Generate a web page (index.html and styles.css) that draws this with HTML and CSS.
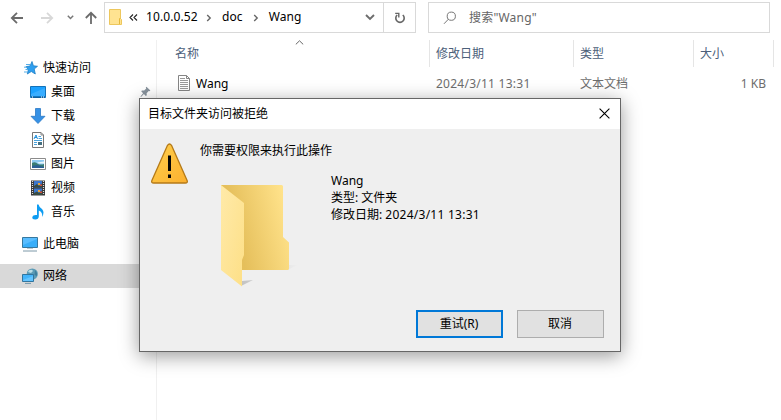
FILE: index.html
```html
<!DOCTYPE html>
<html lang="zh-CN">
<head>
<meta charset="utf-8">
<title>Wang</title>
<link rel="stylesheet" href="styles.css">
</head>
<body>
<div class="explorer">
  <header class="toolbar">
    <nav class="history">
      <svg width="104" height="35" viewBox="0 0 104 35" fill="none">
        <path d="M23 18H12M17 12.8L11.8 18L17 23.2" stroke="#6b6b6b" stroke-width="1.8"/>
        <path d="M41 18H52M47 12.8L52.2 18L47 23.2" stroke="#d8d8d8" stroke-width="1.8"/>
        <path d="M67.8 15.8L70.5 18.5L73.2 15.8" stroke="#777" stroke-width="1.5"/>
        <path d="M91 24V13M85.8 18L91 12.8L96.2 18" stroke="#6b6b6b" stroke-width="1.8"/>
      </svg>
    </nav>
    <div class="address">
      <svg class="address-folder" width="14" height="17" viewBox="0 0 14 17">
        <path d="M.5.5H11.5V9.5L12.5 10.5V15.5H.5Z" fill="#ffe391" stroke="#edc75d"/>
        <path d="M10.5 15V9.5H11.5" fill="none" stroke="#e5b83c"/>
      </svg>
      <svg class="overflow" width="9" height="9" viewBox="0 0 9 9"><path d="M4 1.5L1 4.5L4 7.5M8 1.5L5 4.5L8 7.5" fill="none" stroke="#222" stroke-width="1.1"/></svg>
      <span class="crumb host">10.0.0.52</span>
      <svg class="sep" width="6" height="8" viewBox="0 0 6 8"><path d="M1.2 1L4.2 4L1.2 7" fill="none" stroke="#666" stroke-width="1.4"/></svg>
      <span class="crumb doc">doc</span>
      <svg class="sep" width="6" height="8" viewBox="0 0 6 8"><path d="M1.2 1L4.2 4L1.2 7" fill="none" stroke="#666" stroke-width="1.4"/></svg>
      <span class="crumb">Wang</span>
      <svg class="drop" width="10" height="7" viewBox="0 0 10 7"><path d="M1 1L5 5L9 1" fill="none" stroke="#6d6d6d" stroke-width="1.9"/></svg>
      <div class="refresh">
        <svg width="12" height="12" viewBox="0 0 12 12"><path d="M3.2 3A4.2 4.2 0 1 0 8.8 3" fill="none" stroke="#666" stroke-width="1.6"/><path d="M1.2 1.4H4.8V5.4" fill="none" stroke="#666" stroke-width="1.4"/></svg>
      </div>
    </div>
    <div class="search">
      <svg width="14" height="14" viewBox="0 0 14 14" fill="none" stroke="#777"><circle cx="8.3" cy="5.2" r="4.1"/><path d="M5.4 8.2L1 12.8"/></svg>
      <span>搜索"Wang"</span>
    </div>
  </header>

  <main class="main">
    <aside class="sidebar">
      <div class="item quick">
        <svg width="16" height="16" viewBox="0 0 16 16"><path d="M10 1.5L11.4 5.8L15.5 6.3L12.2 9L13.3 14L9.3 11.5L5.3 14L6.3 9.8L4 6.6L8 6Z" fill="#2e9ff0" stroke="#1f7fc4" stroke-width=".8"/><path d="M4 4.5H8M2 7.2H5M3.5 9.5H6M2 12H5.5" stroke="#56aee8"/></svg>
        <span>快速访问</span>
      </div>
      <div class="item child">
        <svg width="16" height="16" viewBox="0 0 16 16"><path d="M.5 2.5H15.5V13.5H.5Z" fill="#1ba1ff" stroke="#1472b8"/><path d="M1 10L15 4V12H1Z" fill="#39adff"/><path d="M1 13H15" stroke="#0a4c83"/><path d="M2 13H3M11 13H12M13 13H14" stroke="#fff"/></svg>
        <span>桌面</span>
        <svg class="pin" width="11" height="12" viewBox="0 0 11 12"><path d="M6.4.8L10.4 4.6L9.4 5.3L8.7 5L6.6 7.2L6.8 9.3L5.8 10L3.9 8L1 11L.5 10.6L3.1 7.3L1.2 5.3L2 4.4L4.2 4.6L6.2 2.5L5.8 1.5Z" fill="#87929c"/></svg>
      </div>
      <div class="item child">
        <svg width="16" height="16" viewBox="0 0 16 16"><path d="M5.5.5H10.5V8.3H15L8 15.5L1 8.3H5.5Z" fill="#3691e5" stroke="#2b78c5" stroke-width=".8"/></svg>
        <span>下载</span>
      </div>
      <div class="item child">
        <svg width="16" height="16" viewBox="0 0 16 16"><path d="M2.5.5H11L13.5 3V15.5H2.5Z" fill="#fff" stroke="#777"/><path d="M11 .5V3H13.5" fill="none" stroke="#888"/><path d="M4 7L6 3L7.5 7M4.5 5.5H7" stroke="#2492dd" fill="none"/><path d="M8.5 4.5H11M8.5 6.5H12M4 8.5H12M4 10.5H7M4 12.5H7" stroke="#4aa3dc"/><path d="M8 10H12V13H8Z" fill="#456f80"/></svg>
        <span>文档</span>
      </div>
      <div class="item child">
        <svg width="16" height="16" viewBox="0 0 16 16"><path d="M.5 2.5H15.5V13.5H.5Z" fill="#fff" stroke="#8b8b8b"/><path d="M2 4H14V12H2Z" fill="#8dc8ef"/><path d="M2 7Q5 5 8 8Q11 9 14 8V12H2Z" fill="#397b72"/><path d="M2 10L7 9L14 11V12H2Z" fill="#295e94"/><path d="M7 6.5L14 5.5V7.5H9Z" fill="#e8f5fb"/></svg>
        <span>图片</span>
      </div>
      <div class="item child">
        <svg width="16" height="16" viewBox="0 0 16 16"><path d="M1 .5H15V15.5H1Z" fill="#383838"/><path d="M2.5 1V15M13.5 1V15" stroke="#ddd" stroke-width="1.2" stroke-dasharray="1 1"/><path d="M4 1H12V7.5H4ZM4 8.5H12V15H4Z" fill="#3c77ce"/><path d="M4 6L7 4L9 6L12 3.5V7.5H4ZM4 13L7 11.5L9 13L12 10.5V15H4Z" fill="#384d43"/><path d="M8 3H10V5H8ZM8 10H10V12H8Z" fill="#e9a53d"/><path d="M10 4.5H12V6H10ZM10 11.5H12V13H10Z" fill="#d6533b"/></svg>
        <span>视频</span>
      </div>
      <div class="item child">
        <svg width="16" height="16" viewBox="0 0 16 16"><path d="M7 .5H8.5Q9 3 12 5Q15 8 12 13Q13 8 8.8 6.5V12.5Q8.6 15.3 5.3 15.5Q2 15.5 2.3 13Q2.8 10.5 7 11Z" fill="#0d9cf2"/></svg>
        <span>音乐</span>
      </div>
      <div class="item root">
        <svg width="16" height="16" viewBox="0 0 16 16"><path d="M.5 1.5H15.5V11.5H.5Z" fill="#59bdff" stroke="#36789f"/><path d="M1 9L15 3V11H1Z" fill="#39aef9"/><path d="M5 12.5H11" stroke="#bdc9d0"/><path d="M1 15H15" stroke="#7d98a8"/></svg>
        <span>此电脑</span>
      </div>
      <div class="item root selected">
        <svg width="16" height="16" viewBox="0 0 16 16"><circle cx="10.3" cy="6" r="5.6" fill="#5b9bb6"/><path d="M7 2.3Q10 1 11 3L9 5L6 4Z" fill="#b9dce5"/><path d="M13 2L15 5V8L12.5 7Z" fill="#3f7f9d"/><path d="M.5 6.5H11.5V13.5H.5Z" fill="#43b4fa" stroke="#32759e"/><path d="M1 12L11 8V13H1Z" fill="#65c5ff"/><path d="M3 15.4H9" stroke="#7398ab"/></svg>
        <span>网络</span>
      </div>
    </aside>

    <section class="files">
      <div class="columns">
        <div class="col name">名称<svg class="sort" width="9" height="5" viewBox="0 0 9 5"><path d="M.8 4.4L4.5 .8L8.2 4.4" fill="none" stroke="#666"/></svg></div>
        <div class="col">修改日期</div>
        <div class="col">类型</div>
        <div class="col">大小</div>
      </div>
      <div class="file">
        <div class="filename">
          <svg width="12" height="16" viewBox="0 0 12 16"><path d="M.5.5H8.5L11.5 3.5V15.5H.5Z" fill="#fff" stroke="#858585"/><path d="M8.5.5V3.5H11.5" fill="none" stroke="#858585"/><path d="M2 3.5H7M2 5.5H10M2 7.5H10M2 9.5H10M2 11.5H10M2 13.5H10" stroke="#999"/></svg>
          <span>Wang</span>
        </div>
        <div class="cell date">2024/3/11 13:31</div>
        <div class="cell">文本文档</div>
        <div class="cell size">1 KB</div>
      </div>
    </section>
  </main>
</div>

<div class="dialog" role="dialog">
  <div class="titlebar">
    <span>目标文件夹访问被拒绝</span>
    <svg width="11" height="11" viewBox="0 0 11 11"><path d="M.6.6L10.4 10.4M10.4.6L.6 10.4" stroke="#000" stroke-width="1.1"/></svg>
  </div>
  <div class="body">
    <svg class="warning" width="38" height="42" viewBox="0 0 38 42">
      <defs><linearGradient id="amber" x2="1" y2="1"><stop stop-color="#ffd04d"/><stop offset="1" stop-color="#fbb02f"/></linearGradient></defs>
      <path d="M17.5 2.3Q19.5 -.3 21.5 2.3L37.1 37.4Q38 40 35.3 40H3.7Q1 40 1.9 37.4Z" fill="url(#amber)" stroke="#b57a17" stroke-width="1.3"/>
      <path d="M18 12.5H21V28H18ZM18 31.5H21V35H18Z" fill="#050505"/>
    </svg>
    <div class="message">
      <div class="prompt">你需要权限来执行此操作</div>
      <div class="details">
        <svg class="folder" width="80" height="106" viewBox="0 0 80 106">
          <defs>
            <linearGradient id="back" x1="0" y1=".7" x2="1" y2=".4"><stop offset=".25" stop-color="#e5bf5b"/><stop offset="1" stop-color="#ffe28a"/></linearGradient>
            <linearGradient id="front" x2="1" y2="1"><stop stop-color="#ffeaa9"/><stop offset="1" stop-color="#fddf86"/></linearGradient>
            <linearGradient id="shade"><stop stop-color="#c2c2c2"/><stop offset="1" stop-color="#efefef"/></linearGradient>
          </defs>
          <path d="M67 86L78 81L68 81ZM21 102L33 96L22 97Z" fill="url(#shade)"/>
          <path d="M1 1H61.5Q63 1 63 2.5V53L69 58.5V84.5Q69 86 67.5 86H1Z" fill="url(#back)"/>
          <path d="M1 1L24 19V71L22 76V102.5L1 86Z" fill="url(#front)"/>
        </svg>
        <div class="info">
          <div>Wang</div>
          <div>类型: 文件夹</div>
          <div>修改日期: <span class="date">2024/3/11 13:31</span></div>
        </div>
      </div>
    </div>
  </div>
  <div class="actions">
    <button class="button primary">重试(R)</button>
    <button class="button">取消</button>
  </div>
</div>
</body>
</html>
```
FILE: styles.css
```css
* { box-sizing: border-box; }
body {
  margin: 0;
  width: 781px;
  height: 420px;
  overflow: hidden;
  background: #fff;
  color: #000;
  font: 12px/17px "Noto Sans", "Noto Sans CJK SC", sans-serif;
}
svg { display: block; flex: none; }
span { white-space: nowrap; }

.explorer { height: 420px; display: flex; flex-direction: column; }
.toolbar { display: flex; height: 40px; }
.history { width: 104px; }
.address {
  display: flex;
  align-items: center;
  width: 312px;
  height: 31px;
  margin-top: 2px;
  padding-left: 4px;
  border: 1px solid #d9d9d9;
}
.overflow { margin: 0 8px 0 6px; }
.crumb { letter-spacing: .1px; padding-bottom: 2px; }
.crumb.host { width: 51px; }
.sep { margin: 0 10px; }
.host + .sep { margin-left: 9px; }
.drop { margin-left: auto; }
.refresh {
  display: flex;
  align-items: center;
  justify-content: center;
  align-self: stretch;
  width: 32px;
  margin-left: 8px;
  border-left: 1px solid #d9d9d9;
}
.search {
  display: flex;
  align-items: center;
  gap: 12px;
  width: 342px;
  height: 31px;
  margin: 2px 0 0 12px;
  padding-left: 14px;
  border: 1px solid #d9d9d9;
  color: #666;
}
.search span { letter-spacing: .2px; }

.main { display: flex; flex: 1; }
.sidebar { width: 157px; padding-top: 16px; border-right: 1px solid #f0f0f0; }
.item { display: flex; align-items: center; height: 24px; gap: 5px; padding-left: 22px; }
.item span { padding-bottom: 1px; }
.item.child { padding-left: 30px; }
.item.root { margin-top: 8px; }
.item.selected { background: #d9d9d9; }
.pin { margin-left: auto; margin-right: 5px; }

.files { flex: 1; }
.columns, .file { display: grid; grid-template-columns: 273px 144px 120px 80px; }
.col {
  position: relative;
  height: 27px;
  padding: 5px 0 0 6px;
  border-right: 1px solid #e5e5e5;
  color: #4c607a;
}
.col.name { padding-left: 18px; }
.sort { position: absolute; left: 138px; top: 0; }
.file { height: 24px; margin-top: 4px; align-items: center; color: #6d6d6d; }
.filename { display: flex; align-items: center; gap: 6px; padding-left: 21px; color: #000; }
.cell { padding-left: 6px; }
.date { letter-spacing: .25px; }
.size { text-align: right; padding-right: 8px; }

.dialog {
  position: absolute;
  left: 139px;
  top: 98px;
  width: 482px;
  height: 254px;
  display: flex;
  flex-direction: column;
  border: 1px solid #666;
  background: #efefef;
  box-shadow: 0 4px 18px rgba(0, 0, 0, .4);
}
.titlebar {
  display: flex;
  align-items: center;
  justify-content: space-between;
  height: 30px;
  padding: 0 10px 1px 8px;
  background: #fff;
}
.body { display: flex; flex: 1; padding: 13px 0 0 10px; }
.warning { margin-top: 1px; }
.message { margin-left: 12px; }
.details { display: flex; margin: 12px 0 0 20px; }
.folder { margin-top: 13px; }
.info { margin: 1px 0 0 31px; }
.actions { display: flex; justify-content: flex-end; gap: 14px; padding: 0 16px 13px 0; }
.button {
  width: 87px;
  height: 28px;
  padding: 0 1px 2px 0;
  border: 1px solid #adadad;
  background: #e1e1e1;
  color: #000;
  font: inherit;
}
.button.primary { border: 2px solid #0078d7; }
```
